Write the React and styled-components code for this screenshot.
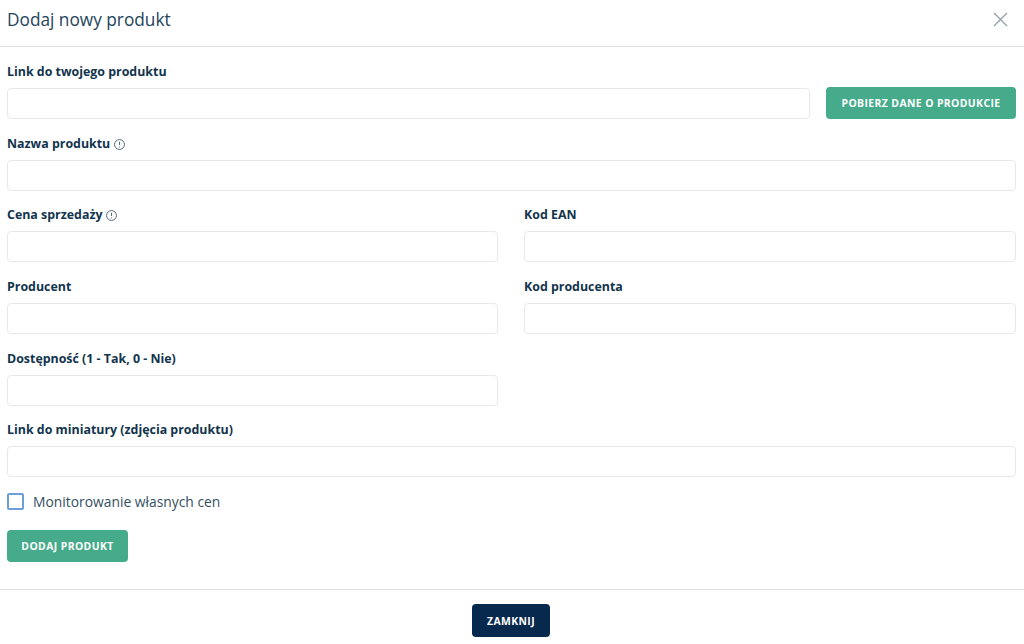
import React from "react";
import styled, { createGlobalStyle } from "styled-components";

const GlobalStyle = createGlobalStyle`
   * {
      box-sizing: border-box;
   }
   html,
   body {
      margin: 0;
      background: #fff;
      overflow: hidden;
   }
   body {
      font-family: "Open Sans", sans-serif;
      color: #12344d;
   }
`;

const Modal = styled.div`
   width: 1024px;
   height: 644px;
   display: flex;
   flex-direction: column;
`;

const Header = styled.header`
   height: 47px;
   padding: 0 16px 7px 7px;
   border-bottom: 1px solid #dee2e6;
   display: flex;
   align-items: center;
   justify-content: space-between;
`;

const Title = styled.h1`
   margin: 0;
   font-size: 17.25px;
   font-weight: 400;
   line-height: 26px;
   color: #24445c;
`;

const CloseIcon = styled.svg`
   width: 15px;
   height: 15px;
   display: block;
   stroke: #8fa0ad;
   stroke-width: 1.3;
   margin-top: -1px;
`;

const Form = styled.form`
   flex: 1;
   padding: 14px 8px 0 7px;
   display: flex;
   flex-direction: column;
`;

const Fields = styled.div`
   display: flex;
   flex-direction: column;
   gap: 13.65px;
`;

const Field = styled.div`
   display: flex;
   flex-direction: column;
   min-width: 0;
`;

const Label = styled.label`
   height: 27px;
   display: flex;
   align-items: flex-start;
   gap: 4px;
   font-size: 12.4px;
   font-weight: 700;
   line-height: 22.6px;
   color: #12344d;
`;

const Input = styled.input`
   width: 100%;
   min-width: 0;
   height: 31px;
   border: 1px solid #e6e9ec;
   border-radius: 4px;
   background: #fff;
   outline: none;
`;

const LinkRow = styled.div`
   display: flex;
   gap: 16px;
   height: 31px;
`;

const Columns = styled.div`
   display: grid;
   grid-template-columns: 491px 492px;
   column-gap: 26px;
   row-gap: 13.65px;
`;

const Button = styled.button`
   border: 0;
   border-radius: 4px;
   background: ${(props) => (props.$dark ? "#07294d" : "#46ab8a")};
   color: #fff;
   font-family: "Open Sans", sans-serif;
   font-size: 10.4px;
   font-weight: 700;
   letter-spacing: 0.4px;
   text-transform: uppercase;
   height: ${(props) => props.$height}px;
   width: ${(props) => props.$width}px;
   padding: 0;
`;

const FetchButton = styled(Button)`
   margin-top: -1px;
   flex-shrink: 0;
`;

const CheckRow = styled.div`
   display: flex;
   align-items: center;
   gap: 9px;
   margin-top: 16px;
   height: 17px;
`;

const Box = styled.span`
   width: 17px;
   height: 17px;
   border: 2px solid #6a9fd8;
   border-radius: 2px;
   background: #fff;
`;

const CheckText = styled.span`
   font-size: 13.85px;
   line-height: 17px;
   color: #35505f;
`;

const SubmitButton = styled(Button)`
   margin-top: 20px;
   align-self: flex-start;
`;

const Footer = styled.footer`
   height: 55px;
   border-top: 1px solid #dee2e6;
   padding: 14px 2px 0 0;
   display: flex;
   justify-content: center;
   align-items: flex-start;
`;

const InfoSvg = styled.svg`
   width: 11px;
   height: 11px;
   margin-top: 6px;
   fill: none;
   stroke: #455f70;
   stroke-width: 1;
`;

const InfoIcon = () => (
   <InfoSvg viewBox="0 0 12 12">
      <circle cx="6" cy="6" r="5.4" />
      <path d="M6 3v3.6M6 8.2v1" />
   </InfoSvg>
);

export default () => (
   <Modal>
      <GlobalStyle />
      <Header>
         <Title>Dodaj nowy produkt</Title>
         <CloseIcon viewBox="0 0 15 15">
            <path d="M1 1l13 13M14 1L1 14" />
         </CloseIcon>
      </Header>
      <Form>
         <Fields>
            <Field>
               <Label>Link do twojego produktu</Label>
               <LinkRow>
                  <Input />
                  <FetchButton type="button" $width={190} $height={32}>
                     Pobierz dane o produkcie
                  </FetchButton>
               </LinkRow>
            </Field>
            <Field>
               <Label>
                  Nazwa produktu <InfoIcon />
               </Label>
               <Input />
            </Field>
            <Columns>
               <Field>
                  <Label>
                     Cena sprzedaży <InfoIcon />
                  </Label>
                  <Input />
               </Field>
               <Field>
                  <Label>Kod EAN</Label>
                  <Input />
               </Field>
               <Field>
                  <Label>Producent</Label>
                  <Input />
               </Field>
               <Field>
                  <Label>Kod producenta</Label>
                  <Input />
               </Field>
               <Field>
                  <Label>Dostępność (1 - Tak, 0 - Nie)</Label>
                  <Input />
               </Field>
            </Columns>
            <Field>
               <Label>Link do miniatury (zdjęcia produktu)</Label>
               <Input />
            </Field>
         </Fields>
         <CheckRow>
            <Box />
            <CheckText>Monitorowanie własnych cen</CheckText>
         </CheckRow>
         <SubmitButton type="button" $width={121} $height={32}>
            Dodaj produkt
         </SubmitButton>
      </Form>
      <Footer>
         <Button type="button" $dark $width={78} $height={33}>
            Zamknij
         </Button>
      </Footer>
   </Modal>
);
